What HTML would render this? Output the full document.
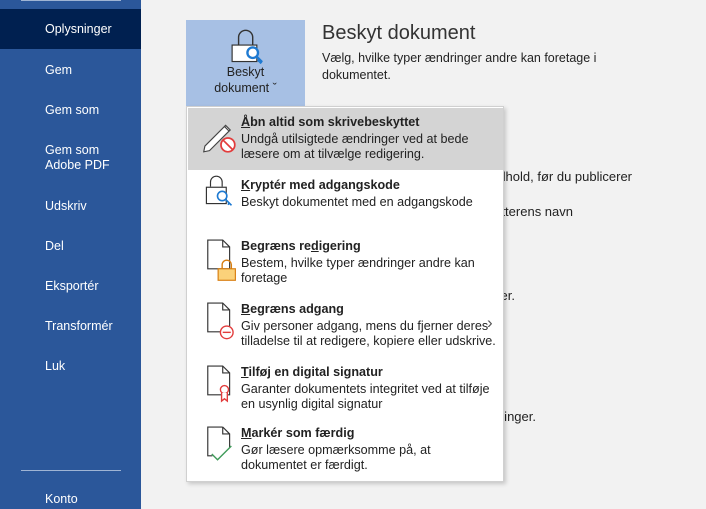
<!DOCTYPE html>
<html><head><meta charset="utf-8"><style>
*{margin:0;padding:0;box-sizing:border-box}
body{width:706px;height:509px;overflow:hidden;background:#f2f2f2;font-family:"Segoe UI","Liberation Sans",sans-serif;position:relative;color:#222}
.side{position:absolute;left:0;top:0;width:141px;height:509px;background:#2b579a}
.side .ln{position:absolute;left:21px;width:100px;height:1px;background:#9fb4d4}
.side .it{position:absolute;left:45px;color:#fff;font-size:12.5px;line-height:15px}
.sel{position:absolute;left:0;top:9px;width:141px;height:40px;background:#002050}
.btn{position:absolute;left:186px;top:20px;width:119px;height:87px;background:#a7c0e4;text-align:center;font-size:12.5px;line-height:16px;color:#222}
.h{position:absolute;left:322px;top:22px;font-size:20px;color:#333;font-weight:300}
.p{position:absolute;left:322px;font-size:12.5px;line-height:17px;color:#222}
.bg{position:absolute;font-size:13px;color:#222;white-space:nowrap}
.menu{position:absolute;left:186px;top:106px;width:318px;height:376px;background:#fff;border:1px solid #d0d0d0;box-shadow:2px 2px 4px rgba(0,0,0,.18);overflow:hidden}
.hov{position:absolute;left:1px;top:1px;width:315px;height:62px;background:#d4d4d4}
.m{position:absolute;left:54px;font-size:12.6px;line-height:15px;color:#222;white-space:nowrap}
.m b{font-weight:bold;display:block;margin-bottom:2px;font-size:12.6px}
.ic{position:absolute;left:14px}
</style></head><body>
<div class="side">
<div class="ln" style="top:0"></div>
<div class="sel"></div>
<div class="it" style="top:22px">Oplysninger</div>
<div class="it" style="top:63px">Gem</div>
<div class="it" style="top:103px">Gem som</div>
<div class="it" style="top:143px">Gem som<br>Adobe PDF</div>
<div class="it" style="top:199px">Udskriv</div>
<div class="it" style="top:239px">Del</div>
<div class="it" style="top:279px">Eksportér</div>
<div class="it" style="top:319px">Transformér</div>
<div class="it" style="top:359px">Luk</div>
<div class="ln" style="top:470px"></div>
<div class="it" style="top:492px">Konto</div>
</div>
<div class="btn">
<svg width="48" height="40" viewBox="0 0 40 34" style="margin-top:8px;display:block;margin-left:38px">
<path d="M12 14V8a6 6 0 0 1 12 0v6" fill="none" stroke="#333" stroke-width="1.2"/>
<rect x="6.5" y="14.5" width="21" height="14" fill="#fff" stroke="#333"/>
<circle cx="24" cy="21" r="4.5" fill="#fff" stroke="#1e7ad2" stroke-width="2"/>
<path d="M27 24l5 5M30 27l-1.5 1.5M31.5 28.5l-1.5 1.5" stroke="#1e7ad2" stroke-width="2"/>
</svg>
<div style="margin-top:-4px">Beskyt<br>dokument &#711;</div>
</div>
<div class="h">Beskyt dokument</div>
<div class="p" style="top:50px">Vælg, hvilke typer ændringer andre kan foretage i<br>dokumentet.</div>
<div class="bg" style="right:74px;top:169px">Kontroller dokumentet for skjult indhold, før du publicerer</div>
<div class="bg" style="right:133px;top:204px">Vær opmærksom på forfatterens navn</div>
<div class="bg" style="right:191px;top:288px">Der er ingen ændringer.</div>
<div class="bg" style="right:170px;top:409px">Der er ingen ændringer.</div>
<div class="menu">
<div class="hov"></div>
<svg class="ic" style="top:8px" width="40" height="46" viewBox="0 0 34 40">
<path d="M3 27l18-18 4 4-18 18-5 1z" fill="#fff" stroke="#444"/><path d="M20 10l4 4" stroke="#444"/>
<circle cx="23" cy="26" r="6" fill="#fff" stroke="#e23c3c" stroke-width="1.5"/><path d="M19 22l8 8" stroke="#e23c3c" stroke-width="1.5"/>
</svg>
<div class="m" style="top:8px"><b><u>Å</u>bn altid som skrivebeskyttet</b>Undgå utilsigtede ændringer ved at bede<br>læsere om at tilvælge redigering.</div>
<svg class="ic" style="top:68px" width="40" height="42" viewBox="0 0 34 36">
<path d="M8 10V6a5 5 0 0 1 10 0v4" fill="none" stroke="#333"/>
<rect x="4.5" y="10.5" width="17" height="14" fill="#fff" stroke="#333"/>
<circle cx="18" cy="18" r="4" fill="#fff" stroke="#1e7ad2" stroke-width="1.4"/>
<path d="M21 21l5 5M24 24l-1 1.5" stroke="#1e7ad2" stroke-width="1.4"/>
</svg>
<div class="m" style="top:71px"><b><u>K</u>ryptér med adgangskode</b>Beskyt dokumentet med en adgangskode</div>
<svg class="ic" style="top:129px" width="40" height="46" viewBox="0 0 34 40">
<path d="M5.5 3.5h13l6 6v19h-19z" fill="#fff" stroke="#333"/><path d="M18.5 3.5v6h6" fill="none" stroke="#333"/>
<path d="M18 29v-4a4 4 0 0 1 8 0v4" fill="none" stroke="#d87d0e" stroke-width="1.2"/>
<rect x="14.5" y="28.5" width="15" height="10" fill="#fbd27a" stroke="#d87d0e"/>
</svg>
<div class="m" style="top:132px"><b>Begræns re<u>d</u>igering</b>Bestem, hvilke typer ændringer andre kan<br>foretage</div>
<svg class="ic" style="top:192px" width="40" height="46" viewBox="0 0 34 40">
<path d="M5.5 3.5h13l6 6v19h-19z" fill="#fff" stroke="#333"/><path d="M18.5 3.5v6h6" fill="none" stroke="#333"/>
<circle cx="22" cy="29" r="5.5" fill="#fff" stroke="#e23c3c" stroke-width="1.2"/><path d="M18.5 29h7" stroke="#e23c3c" stroke-width="1.2"/>
</svg>
<div class="m" style="top:195px"><b><u>B</u>egræns adgang</b>Giv personer adgang, mens du fjerner deres<br>tilladelse til at redigere, kopiere eller udskrive.</div>
<div style="position:absolute;left:300px;top:206px;font-size:17px;color:#555">&#8250;</div>
<svg class="ic" style="top:255px" width="40" height="46" viewBox="0 0 34 40">
<path d="M5.5 3.5h13l6 6v19h-19z" fill="#fff" stroke="#333"/><path d="M18.5 3.5v6h6" fill="none" stroke="#333"/>
<circle cx="20" cy="24" r="3.5" fill="#fff" stroke="#e23c3c" stroke-width="1.2"/><path d="M17.5 27v7l2.5-2 2.5 2v-7" fill="#fff" stroke="#e23c3c" stroke-width="1.2"/>
</svg>
<div class="m" style="top:258px"><b><u>T</u>ilføj en digital signatur</b>Garanter dokumentets integritet ved at tilføje<br>en usynlig digital signatur</div>
<svg class="ic" style="top:316px" width="40" height="46" viewBox="0 0 34 40">
<path d="M18.5 3.5h-13v25h4" fill="#fff" stroke="#333"/><path d="M18.5 3.5l6 6v12M18.5 3.5v6h6" fill="none" stroke="#333"/>
<path d="M9 27l5 5 12-12" fill="none" stroke="#3f9b5a" stroke-width="1.2"/>
</svg>
<div class="m" style="top:319px"><b><u>M</u>arkér som færdig</b>Gør læsere opmærksomme på, at<br>dokumentet er færdigt.</div>
</div>
</body></html>
